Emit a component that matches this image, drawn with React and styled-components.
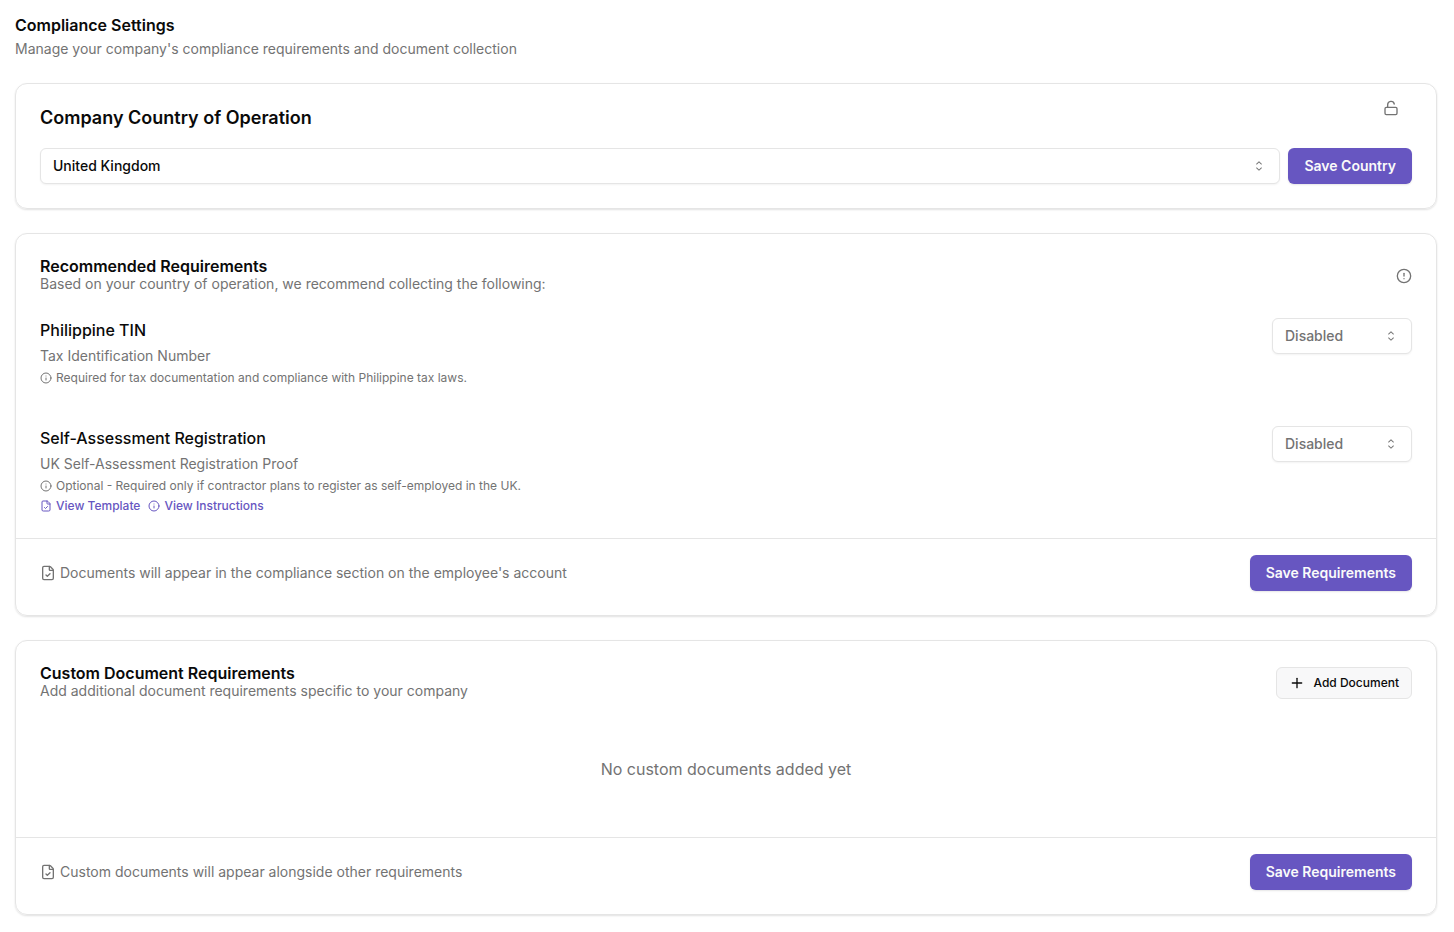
import React, { useState } from "react"
import styled, { createGlobalStyle, css } from "styled-components"
import { CircleAlert, FileCheck, Info, LockOpen, Plus } from "lucide-react"
import { RxCaretSort } from "react-icons/rx"

const GlobalStyle = createGlobalStyle`
  *,
  *::before,
  *::after {
    box-sizing: border-box;
  }
  :root {
    --color-text: #0a0a0a;
    --color-muted: #737373;
    --color-border: #e5e5e5;
    --color-accent: #6756c1;
  }
  body {
    margin: 0;
    background: #fff;
    color: var(--color-text);
    font-family: Inter, "Liberation Sans", sans-serif;
    font-size: 14px;
    line-height: 20px;
  }
  h1, h2, h3, p {
    margin: 0;
  }
  button, select {
    font: inherit;
  }
`

const Page = styled.main`
  display: flex;
  flex-direction: column;
  gap: 24px;
  padding: 17px 17px 16px 15px;
`

const PageHeader = styled.header`
  display: flex;
  flex-direction: column;
  gap: 6px;
`

const Title = styled.h2`
  font-size: 16px;
  line-height: 16px;
  font-weight: 600;
`

const LargeTitle = styled.h2`
  font-size: 18px;
  line-height: 28px;
  font-weight: 600;
`

const Muted = styled.p`
  color: var(--color-muted);
`

const Card = styled.section`
  border: 1px solid var(--color-border);
  border-radius: 12px;
  box-shadow: 0 1px 2px rgba(0, 0, 0, 0.12);
`

const CardHeader = styled.div`
  display: flex;
  align-items: center;
  justify-content: space-between;
  padding: 24px 24px 0;
`

const CardBody = styled.div`
  padding: 24px;
`

const CardFooter = styled.footer`
  display: flex;
  align-items: center;
  justify-content: space-between;
  padding: 16px 24px 24px;
  border-top: 1px solid var(--color-border);
`

const FooterNote = styled(Muted)`
  display: flex;
  align-items: center;
  gap: 4px;
`

const Button = styled.button`
  display: inline-flex;
  align-items: center;
  justify-content: center;
  flex: none;
  border-radius: 6px;
  cursor: pointer;
  ${({ $variant }) =>
    $variant === "outline"
      ? css`
          height: 32px;
          gap: 8px;
          padding: 0 12px;
          border: 1px solid var(--color-border);
          background: #f8f8f9;
          color: var(--color-text);
          font-size: 12px;
          font-weight: 500;
        `
      : css`
          height: 36px;
          padding: 0 16px;
          border: 0;
          background: var(--color-accent);
          color: #fafafa;
          font-weight: 600;
          box-shadow: 0 1px 2px rgba(0, 0, 0, 0.1);
        `}
`

const SelectWrapper = styled.div`
  display: grid;
  align-items: center;
  flex: ${({ $wide }) => ($wide ? "1 1 0" : "0 0 140px")};
  color: ${({ $wide }) => ($wide ? "var(--color-text)" : "var(--color-muted)")};
  > * {
    grid-area: 1 / 1;
  }
  > svg {
    justify-self: end;
    margin-right: 13px;
    color: var(--color-muted);
    pointer-events: none;
  }
`

const SelectBox = styled.select`
  appearance: none;
  width: 100%;
  height: 36px;
  padding: 0 32px 0 12px;
  border: 1px solid var(--color-border);
  border-radius: 6px;
  background: #fff;
  color: inherit;
  font-weight: 500;
  box-shadow: 0 1px 2px rgba(0, 0, 0, 0.05);
`

const CountryHeader = styled.div`
  display: flex;
  align-items: flex-start;
  justify-content: space-between;
  padding: 16px 37px 0 24px;
  > h2 {
    padding-top: 4px;
  }
`

const IconButton = styled.button`
  display: flex;
  padding: 0;
  border: 0;
  background: none;
  color: var(--color-muted);
  cursor: pointer;
`

const CountryRow = styled.div`
  display: flex;
  gap: 8px;
  padding: 16px 24px 24px;
`

const RequirementList = styled.div`
  display: flex;
  flex-direction: column;
  gap: 40px;
  padding: 24px;
`

const RequirementRow = styled.div`
  display: flex;
  align-items: flex-start;
  justify-content: space-between;
`

const RequirementText = styled.div`
  display: flex;
  flex-direction: column;
  gap: 4px;
`

const RequirementName = styled.h3`
  font-size: 16px;
  line-height: 24px;
  font-weight: 500;
`

const Hint = styled.p`
  display: flex;
  align-items: center;
  gap: 4px;
  color: var(--color-muted);
  font-size: 12px;
  line-height: 16px;
`

const Links = styled.div`
  display: flex;
  gap: 8px;
`

const TextLink = styled.a`
  display: flex;
  align-items: center;
  gap: 4px;
  color: var(--color-accent);
  font-size: 12px;
  line-height: 16px;
  font-weight: 500;
  text-decoration: none;
`

const Empty = styled.p`
  padding: 32px 0;
  color: var(--color-muted);
  font-size: 16px;
  line-height: 24px;
  text-align: center;
`

const requirements = [
  {
    id: "tin",
    name: "Philippine TIN",
    description: "Tax Identification Number",
    hint: "Required for tax documentation and compliance with Philippine tax laws.",
  },
  {
    id: "self-assessment",
    name: "Self-Assessment Registration",
    description: "UK Self-Assessment Registration Proof",
    hint: "Optional - Required only if contractor plans to register as self-employed in the UK.",
    links: true,
  },
]

const Select = ({ label, options, wide }) => {
  const [value, setValue] = useState(options[0])
  return (
    <SelectWrapper $wide={wide}>
      <SelectBox
        aria-label={label}
        value={value}
        onChange={(e) => setValue(e.target.value)}
      >
        {options.map((option) => (
          <option key={option}>{option}</option>
        ))}
      </SelectBox>
      <RxCaretSort size={16} />
    </SelectWrapper>
  )
}

const Requirement = ({ name, description, hint, links }) => (
  <RequirementRow>
    <RequirementText>
      <RequirementName>{name}</RequirementName>
      <Muted>{description}</Muted>
      <Hint>
        <Info size={12} />
        {hint}
      </Hint>
      {links && (
        <Links>
          <TextLink href="#template">
            <FileCheck size={12} />
            View Template
          </TextLink>
          <TextLink href="#instructions">
            <Info size={12} />
            View Instructions
          </TextLink>
        </Links>
      )}
    </RequirementText>
    <Select label={name} options={["Disabled", "Optional", "Required"]} />
  </RequirementRow>
)

const App = () => {
  return (
    <>
      <GlobalStyle />
      <Page>
        <PageHeader>
          <Title as="h1">Compliance Settings</Title>
          <Muted>
            Manage your company's compliance requirements and document collection
          </Muted>
        </PageHeader>

        <Card>
          <CountryHeader>
            <LargeTitle>Company Country of Operation</LargeTitle>
            <IconButton aria-label="Unlock country">
              <LockOpen size={16} />
            </IconButton>
          </CountryHeader>
          <CountryRow>
            <Select
              wide
              label="Company Country of Operation"
              options={["United Kingdom", "Philippines"]}
            />
            <Button>Save Country</Button>
          </CountryRow>
        </Card>

        <Card>
          <CardHeader>
            <div>
              <Title>Recommended Requirements</Title>
              <Muted>
                Based on your country of operation, we recommend collecting the
                following:
              </Muted>
            </div>
            <CircleAlert size={16} color="var(--color-muted)" />
          </CardHeader>
          <RequirementList>
            {requirements.map((item) => (
              <Requirement key={item.id} {...item} />
            ))}
          </RequirementList>
          <CardFooter>
            <FooterNote>
              <FileCheck size={16} />
              Documents will appear in the compliance section on the employee's
              account
            </FooterNote>
            <Button>Save Requirements</Button>
          </CardFooter>
        </Card>

        <Card>
          <CardHeader>
            <div>
              <Title>Custom Document Requirements</Title>
              <Muted>
                Add additional document requirements specific to your company
              </Muted>
            </div>
            <Button $variant="outline">
              <Plus size={16} />
              Add Document
            </Button>
          </CardHeader>
          <CardBody>
            <Empty>No custom documents added yet</Empty>
          </CardBody>
          <CardFooter>
            <FooterNote>
              <FileCheck size={16} />
              Custom documents will appear alongside other requirements
            </FooterNote>
            <Button>Save Requirements</Button>
          </CardFooter>
        </Card>
      </Page>
    </>
  )
}

export default App
